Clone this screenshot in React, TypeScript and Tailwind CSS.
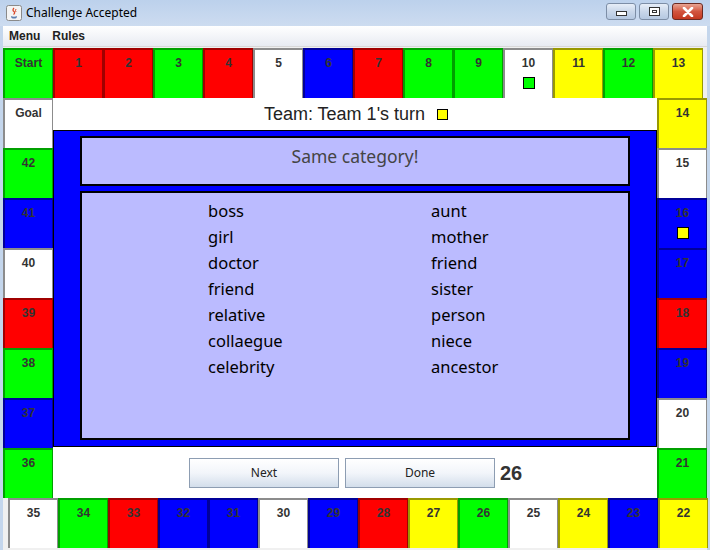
import React from 'react'

type Tile = { label: string; color: string; marker?: string }

const tileStyle: Record<string, string> = {
  g: 'bg-[#00ff00] border-[#00a000]',
  r: 'bg-[#ff0000] border-[#a00000]',
  b: 'bg-[#0000ff] border-[#000099]',
  y: 'bg-[#ffff00] border-[#999900]',
  w: 'bg-white border-[#8c8c8c]',
}

const markerStyle: Record<string, string> = {
  g: 'bg-[#00ff00]',
  y: 'bg-[#ffff00]',
}

const topRow: Tile[] = [
  { label: 'Start', color: 'g' },
  { label: '1', color: 'r' },
  { label: '2', color: 'r' },
  { label: '3', color: 'g' },
  { label: '4', color: 'r' },
  { label: '5', color: 'w' },
  { label: '6', color: 'b' },
  { label: '7', color: 'r' },
  { label: '8', color: 'g' },
  { label: '9', color: 'g' },
  { label: '10', color: 'w', marker: 'g' },
  { label: '11', color: 'y' },
  { label: '12', color: 'g' },
  { label: '13', color: 'y' },
]

const leftCol: Tile[] = [
  { label: 'Goal', color: 'w' },
  { label: '42', color: 'g' },
  { label: '41', color: 'b' },
  { label: '40', color: 'w' },
  { label: '39', color: 'r' },
  { label: '38', color: 'g' },
  { label: '37', color: 'b' },
  { label: '36', color: 'g' },
]

const rightCol: Tile[] = [
  { label: '14', color: 'y' },
  { label: '15', color: 'w' },
  { label: '16', color: 'b', marker: 'y' },
  { label: '17', color: 'b' },
  { label: '18', color: 'r' },
  { label: '19', color: 'b' },
  { label: '20', color: 'w' },
  { label: '21', color: 'g' },
]

const bottomRow: Tile[] = [
  { label: '35', color: 'w' },
  { label: '34', color: 'g' },
  { label: '33', color: 'r' },
  { label: '32', color: 'b' },
  { label: '31', color: 'b' },
  { label: '30', color: 'w' },
  { label: '29', color: 'b' },
  { label: '28', color: 'r' },
  { label: '27', color: 'y' },
  { label: '26', color: 'g' },
  { label: '25', color: 'w' },
  { label: '24', color: 'y' },
  { label: '23', color: 'b' },
  { label: '22', color: 'y' },
]

const leftWords = ['boss', 'girl', 'doctor', 'friend', 'relative', 'collaegue', 'celebrity']
const rightWords = ['aunt', 'mother', 'friend', 'sister', 'person', 'niece', 'ancestor']

const Square = ({ tile }: { tile: Tile }) => {
  return (
    <div
      className={`w-[50px] h-[50px] shrink-0 flex flex-col items-center border-l-2 border-t-2 border-r ${tileStyle[tile.color]}`}
    >
      <span className="mt-[6px] text-[12px] font-bold leading-[14px] text-[#333333]">{tile.label}</span>
      {tile.marker && (
        <div className={`mt-[7px] w-[12px] h-[12px] border border-black ${markerStyle[tile.marker]}`} />
      )}
    </div>
  )
}

const TitleButton = ({ kind }: { kind: string }) => {
  if (kind === 'close') {
    return (
      <div className="w-[31px] h-[17px] rounded-[3px] border border-[#6b2a22] bg-gradient-to-b from-[#e8a493] via-[#d2553f] to-[#c4381f] flex items-center justify-center">
        <svg width="14" height="10" viewBox="0 0 14 10">
          <path d="M3 1 L11 9 M11 1 L3 9" stroke="#ffffff" strokeWidth="2.6" strokeLinecap="round" />
        </svg>
      </div>
    )
  }
  return (
    <div className="w-[30px] h-[17px] rounded-[3px] border border-[#7d8ea6] bg-gradient-to-b from-[#e7eef8] via-[#c9d7ea] to-[#b5c8e1] flex items-center justify-center">
      {kind === 'min' ? (
        <div className="w-[11px] h-[5px] mt-[4px] border border-[#333] bg-white" />
      ) : (
        <div className="w-[11px] h-[9px] border border-[#333] bg-white flex items-center justify-center">
          <div className="w-[5px] h-[3px] border border-[#333]" />
        </div>
      )}
    </div>
  )
}

const App = () => {
  return (
    <div className="w-[710px] h-[550px] bg-[#c4d6ec] flex flex-col font-['Liberation_Sans',Arial,sans-serif] overflow-hidden">
      {/* title bar */}
      <div className="h-[26px] shrink-0 flex items-center pl-[6px] pr-[7px] bg-gradient-to-b from-[#bcd1ec] to-[#cddcf0]">
        <svg width="16" height="16" viewBox="0 0 16 16">
          <rect x="0.5" y="0.5" width="15" height="15" rx="2" fill="#f4f4f4" stroke="#8a8a8a" />
          <path d="M5 11 Q8 12.5 11 11 L10.5 13 Q8 14 5.5 13 Z" fill="#5b7fb0" />
          <path d="M8 3 Q6 5 8 6.5 Q9.5 8 7.5 9.5" stroke="#d9482b" strokeWidth="1.3" fill="none" />
          <path d="M10 4 Q9 5.5 10 7" stroke="#d9482b" strokeWidth="1" fill="none" />
        </svg>
        <span className="ml-[4px] text-[12px] text-black font-['Noto_Sans',sans-serif]">Challenge Accepted</span>
        <div className="ml-auto flex gap-[3px] -mt-[3px]">
          <TitleButton kind="min" />
          <TitleButton kind="max" />
          <TitleButton kind="close" />
        </div>
      </div>
      {/* content */}
      <div className="flex-1 mx-[3px] flex flex-col bg-white">
        <div className="h-[21px] shrink-0 flex items-center gap-[12px] pl-[6px] bg-gradient-to-b from-white to-[#e8ebf2] border-b border-[#d8d8d8] text-[12px] font-bold text-[#222]">
          <span>Menu</span>
          <span>Rules</span>
        </div>
        <div className="flex-1 bg-[#f0f0f0] pt-[1px]">
          <div className="flex">
            {topRow.map((t) => (
              <Square key={t.label} tile={t} />
            ))}
          </div>
          <div className="flex">
            <div className="flex flex-col">
              {leftCol.map((t) => (
                <Square key={t.label} tile={t} />
              ))}
            </div>
            <div className="w-[604px] bg-white flex flex-col">
              <div className="h-[32px] flex items-center justify-center gap-[12px] pl-[2px]">
                <span className="text-[18px] text-[#222]">Team: Team 1's turn</span>
                <div className="w-[11px] h-[11px] border border-black bg-[#ffff00]" />
              </div>
              <div className="h-[317px] bg-[#0000ff] border border-black px-[26px] pt-[5px] pb-[6px] flex flex-col gap-[5px] font-['Noto_Sans',sans-serif]">
                <div className="h-[50px] shrink-0 bg-[#bbbbff] border-2 border-black flex items-center justify-center">
                  <span className="text-[17.5px] text-[#444] -mt-[10px]">Same category!</span>
                </div>
                <div className="flex-1 bg-[#bbbbff] border-2 border-black flex pt-[5px]">
                  <div className="ml-[126px] w-[223px] flex flex-col">
                    {leftWords.map((w) => (
                      <span key={w} className="text-[16.5px] leading-[26px] text-black">{w}</span>
                    ))}
                  </div>
                  <div className="flex flex-col">
                    {rightWords.map((w, i) => (
                      <span key={w + i} className="text-[16.5px] leading-[26px] text-black">{w}</span>
                    ))}
                  </div>
                </div>
              </div>
              <div className="flex-1 flex items-center pl-[136px] gap-[6px]">
                <button className="w-[150px] h-[30px] border border-[#8d9db2] bg-gradient-to-b from-white via-[#f2f5fa] to-[#d3deeb] text-[12px] text-[#222] font-['Noto_Sans',sans-serif]">
                  Next
                </button>
                <button className="w-[150px] h-[30px] border border-[#8d9db2] bg-gradient-to-b from-white via-[#f2f5fa] to-[#d3deeb] text-[12px] text-[#222] font-['Noto_Sans',sans-serif]">
                  Done
                </button>
                <span className="-ml-[1px] text-[20px] font-bold text-[#333]">26</span>
              </div>
            </div>
            <div className="flex flex-col">
              {rightCol.map((t) => (
                <Square key={t.label} tile={t} />
              ))}
            </div>
          </div>
          <div className="flex pl-[5px]">
            {bottomRow.map((t) => (
              <Square key={t.label} tile={t} />
            ))}
          </div>
        </div>
      </div>
    </div>
  )
}

export default App
